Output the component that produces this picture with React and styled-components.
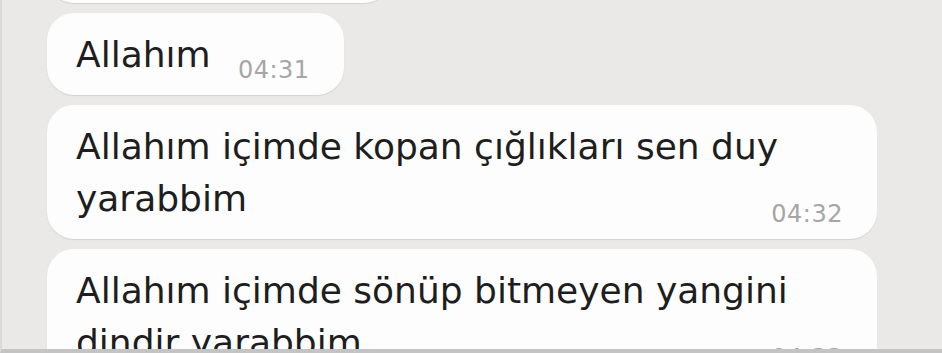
import React from 'react';
import styled, { createGlobalStyle } from 'styled-components';

const GlobalStyle = createGlobalStyle`
  html, body {
    margin: 0;
    padding: 0;
    background: #ebe9e7;
  }
  body {
    font-family: "DejaVu Sans", "Liberation Sans", sans-serif;
  }
`;

const Frame = styled.div`
  box-sizing: border-box;
  width: 942px;
  height: 353px;
  overflow: hidden;
  background: #ebe9e7;
  border-left: 2px solid #dbd9d7;
  border-bottom: 4px solid #c4c4c4;
`;

const ChatList = styled.div`
  display: flex;
  flex-direction: column;
  align-items: flex-start;
  gap: 10px;
  margin-top: -79px;
  padding-left: 45px;
`;

const Bubble = styled.div`
  display: grid;
  box-sizing: border-box;
  max-width: 830px;
  padding: 16px 34px 14px 29px;
  background: #fdfdfd;
  border-radius: 27px;
  box-shadow: 0 1px 1px rgba(0, 0, 0, 0.1);
`;

const Text = styled.div`
  grid-area: 1 / 1;
  font-size: 36px;
  line-height: 52px;
  color: #1e1e1e;
`;

const Spacer = styled.span`
  display: inline-block;
  width: ${(p) => p.$w}px;
`;

const Time = styled.span`
  grid-area: 1 / 1;
  align-self: end;
  justify-self: end;
  font-size: 24px;
  line-height: 24px;
  letter-spacing: 0.5px;
  color: #a6a6a6;
  margin-bottom: -1px;
`;

const messages = [
  { text: 'Yarabbim', time: '04:30', spacer: 114 },
  { text: 'Allahım', time: '04:31', spacer: 99 },
  { text: 'Allahım içimde kopan çığlıkları sen duy yarabbim', time: '04:32', spacer: 101 },
  { text: 'Allahım içimde sönüp bitmeyen yangini dindir yarabbim', time: '04:33', spacer: 101 },
];

export default function App() {
  return (
    <>
      <GlobalStyle />
      <Frame>
        <ChatList>
          {messages.map((m, i) => (
            <Bubble key={i}>
              <Text>
                {m.text}
                <Spacer $w={m.spacer} />
              </Text>
              <Time>{m.time}</Time>
            </Bubble>
          ))}
        </ChatList>
      </Frame>
    </>
  );
}
